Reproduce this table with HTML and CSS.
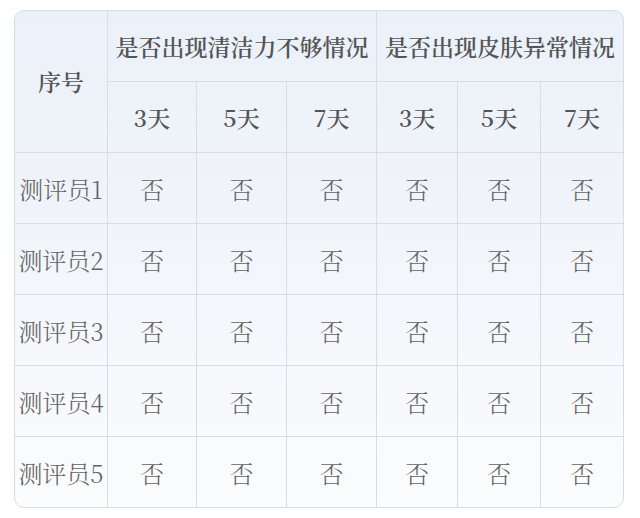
FILE: index.html
```html
<!DOCTYPE html>
<html lang="zh">
<head>
<meta charset="utf-8">
<link rel="stylesheet" href="styles.css">
</head>
<body>
<div class="wrap">
<table class="grid">
  <colgroup>
    <col class="c1"><col class="c2"><col class="c3"><col class="c4"><col class="c5"><col class="c6"><col class="c7">
  </colgroup>
  <thead>
    <tr class="h1">
      <th rowspan="2">序号</th>
      <th colspan="3">是否出现清洁力不够情况</th>
      <th colspan="3">是否出现皮肤异常情况</th>
    </tr>
    <tr class="h2">
      <th>3天</th><th>5天</th><th>7天</th><th>3天</th><th>5天</th><th>7天</th>
    </tr>
  </thead>
  <tbody>
    <tr><td class="name">测评员1</td><td>否</td><td>否</td><td>否</td><td>否</td><td>否</td><td>否</td></tr>
    <tr><td class="name">测评员2</td><td>否</td><td>否</td><td>否</td><td>否</td><td>否</td><td>否</td></tr>
    <tr><td class="name">测评员3</td><td>否</td><td>否</td><td>否</td><td>否</td><td>否</td><td>否</td></tr>
    <tr><td class="name">测评员4</td><td>否</td><td>否</td><td>否</td><td>否</td><td>否</td><td>否</td></tr>
    <tr><td class="name">测评员5</td><td>否</td><td>否</td><td>否</td><td>否</td><td>否</td><td>否</td></tr>
  </tbody>
</table>
</div>
</body>
</html>
```
FILE: styles.css
```css
html, body {
  margin: 0;
  padding: 0;
  background: #ffffff;
}
.wrap {
  padding: 10px 0 0 14px;
}
.grid {
  border-collapse: separate;
  border-spacing: 0;
  width: 609px;
  table-layout: fixed;
  border: 1px solid #d6dde5;
  border-radius: 10px;
  overflow: hidden;
  background: linear-gradient(180deg, #ebf1f9 0%, #f2f5fa 50%, #fbfcfd 100%);
  font-family: "Noto Serif CJK SC", "Liberation Serif", serif;
  color: #5a5a5a;
}
.c1 { width: 92px; }
.c2 { width: 89px; }
.c3 { width: 90px; }
.c4 { width: 90px; }
.c5 { width: 81px; }
.c6 { width: 83px; }
.c7 { width: 83px; }
th, td {
  border-left: 1px solid #d6dde5;
  border-top: 1px solid #d6dde5;
  text-align: center;
  padding: 0;
  height: 70px;
}
th:first-child, td:first-child { border-left: none; }
.h1 th { border-top: none; }
.h2 th:first-child { border-left: 1px solid #d6dde5; }
th {
  font-size: 23px;
  font-weight: 600;
  color: #555555;
}
td {
  font-size: 24px;
  font-weight: 300;
  color: #636363;
}
td.name {
  font-size: 24px;
}
```
